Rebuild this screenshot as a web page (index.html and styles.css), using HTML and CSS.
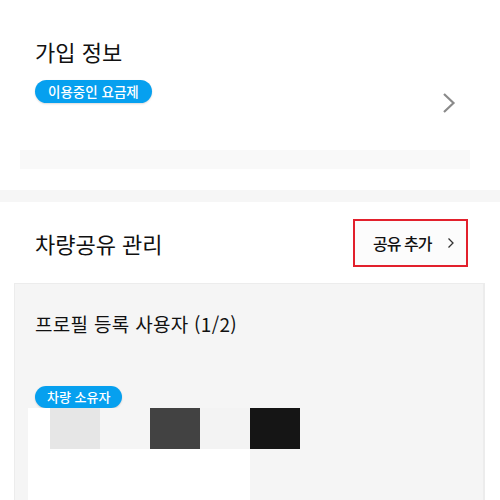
FILE: index.html
```html
<!DOCTYPE html>
<html lang="ko">
<head>
<meta charset="utf-8">
<link rel="stylesheet" href="styles.css">
</head>
<body>
<section class="join">
  <div class="join-row">
    <div class="join-info">
      <h2 class="title">가입 정보</h2>
      <span class="pill">이용중인 요금제</span>
    </div>
    <svg class="chev" width="14" height="22" viewBox="0 0 14 22"><path d="M2 2 L11.5 11 L2 20" fill="none" stroke="#8a8a8a" stroke-width="2.2"/></svg>
  </div>
  <div class="plan-bar"></div>
</section>
<div class="divider"></div>
<section class="share">
  <div class="share-head">
    <h2 class="title">차량공유 관리</h2>
    <div class="add-wrap">
      <a class="add-btn">공유 추가<svg class="add-chev" width="8" height="12" viewBox="0 0 8 12"><path d="M1.5 1.5 L6 6 L1.5 10.5" fill="none" stroke="#333" stroke-width="1.3"/></svg></a>
    </div>
  </div>
  <div class="card">
    <h3 class="card-title">프로필 등록 사용자 (1/2)</h3>
    <span class="pill pill-owner">차량 소유자</span>
    <div class="strip">
      <div class="blk b0"></div>
      <div class="blk b1"></div>
      <div class="blk b2"></div>
      <div class="blk b3"></div>
      <div class="blk b4"></div>
      <div class="blk b5"></div>
    </div>
    <div class="white-box"></div>
  </div>
</section>
</body>
</html>
```

FILE: styles.css
```css
* { box-sizing: border-box; }
html, body { margin: 0; padding: 0; background: #fff; }
body {
  font-family: "Noto Sans CJK KR", "Noto Sans", sans-serif;
  color: #111;
  width: 500px;
  height: 500px;
  overflow: hidden;
}
.title {
  margin: 0;
  font-size: 22px;
  line-height: 28px;
  font-weight: 400;
  letter-spacing: 0;
}
.join { padding-top: 37px; }
.join-row {
  display: flex;
  justify-content: space-between;
  padding: 0 44px 0 35px;
}
.join-info { display: flex; flex-direction: column; align-items: flex-start; }
.pill {
  display: inline-block;
  margin-top: 15px;
  height: 23px;
  line-height: 23px;
  padding: 0 13px;
  border-radius: 12px;
  background: #06a0ef;
  color: #fff;
  font-size: 13.5px;
  font-weight: 500;
  box-shadow: 0 1px 2px rgba(0, 0, 0, 0.15);
}
.chev { margin-top: 55px; }
.plan-bar {
  margin: 36px 30px 0 20px;
  height: 19px;
  background: #f9f9f9;
}
.divider {
  margin-top: 21px;
  height: 12px;
  background: #f6f6f6;
}
.share-head {
  display: flex;
  justify-content: space-between;
  align-items: center;
  padding: 17px 32px 16px 35px;
}
.add-wrap { background: #fcfcfc; }
.add-btn {
  display: flex;
  align-items: center;
  width: 115px;
  height: 48px;
  padding-left: 18px;
  border: 2px solid #e2202c;
  font-size: 16px;
  font-weight: 500;
  letter-spacing: -1px;
  color: #111;
}
.add-chev { margin-left: 16px; }
.card {
  margin: 0 15px 0 14px;
  height: 240px;
  background: #f5f5f5;
  border: 1px solid #ececec;
  border-right-width: 2px;
  padding: 27px 0 0 13px;
  display: flex;
  flex-direction: column;
  align-items: flex-start;
}
.card-title {
  margin: 0 0 0 7px;
  font-size: 19px;
  line-height: 26px;
  font-weight: 400;
  letter-spacing: 0.3px;
}
.pill-owner { margin: 49px 0 0 7px; height: 22px; line-height: 22px; font-size: 13px; padding: 0 12px; }
.strip { display: flex; height: 41px; }
.blk { width: 50px; height: 100%; }
.b0 { width: 22px; background: #fff; }
.b1 { background: #e6e6e6; }
.b2 { background: #f5f5f5; }
.b3 { background: #424242; }
.b4 { background: #f3f3f3; }
.b5 { background: #151515; }
.white-box { width: 222px; height: 60px; background: #fff; }
```
